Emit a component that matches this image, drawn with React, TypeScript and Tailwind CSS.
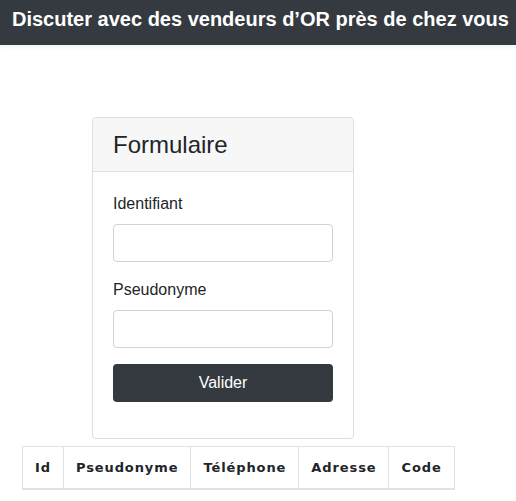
import React from 'react';

const columns = ['Id', 'Pseudonyme', 'Téléphone', 'Adresse', 'Code'];

const App: React.FC = () => {
  return (
    <div className="min-h-screen bg-white text-[#212529] font-['Liberation_Sans',Arial,sans-serif]">
      <header className="h-[45px] bg-[#343a40] pl-[12px] pt-[6px] shadow-[0_2px_4px_rgba(0,0,0,0.06)]">
        <h1 className="text-[20px] font-bold leading-[26px] text-white whitespace-nowrap">
          Discuter avec des vendeurs d’OR près de chez vous
        </h1>
      </header>

      <div className="mt-[72px] ml-[92px] w-[262px] rounded-[4px] border border-[#dfdfdf]">
        <div className="bg-[#f7f7f7] border-b border-[#dfdfdf] px-[20px] py-[12px] rounded-t-[4px]">
          <h2 className="text-[24px] leading-[29px]">Formulaire</h2>
        </div>
        <form className="p-[20px] pb-[36px]">
          <div className="mb-[16px]">
            <label className="block text-[16px] leading-[24px] mb-[8px]">Identifiant</label>
            <input className="block w-full h-[38px] rounded-[4px] border border-[#ced4da] px-3" />
          </div>
          <div className="mb-[16px]">
            <label className="block text-[16px] leading-[24px] mb-[8px]">Pseudonyme</label>
            <input className="block w-full h-[38px] rounded-[4px] border border-[#ced4da] px-3" />
          </div>
          <button
            type="button"
            className="w-full h-[38px] rounded-[4px] bg-[#343a40] text-white text-[16px]"
          >
            Valider
          </button>
        </form>
      </div>

      <table className="mt-[7px] ml-[22px] border-collapse font-['DejaVu_Sans',sans-serif]">
        <thead>
          <tr>
            {columns.map((c) => (
              <th
                key={c}
                className="border border-[#dee2e6] border-b-2 h-[42px] px-[12px] text-[13px] font-bold tracking-[0.9px] text-left"
              >
                {c}
              </th>
            ))}
          </tr>
        </thead>
      </table>
    </div>
  );
};

export default App;
